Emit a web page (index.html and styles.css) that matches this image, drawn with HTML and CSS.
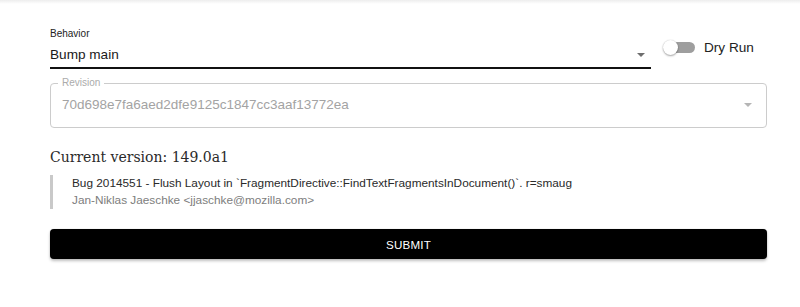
FILE: index.html
```html
<!DOCTYPE html>
<html lang="en">
<head>
<meta charset="utf-8">
<title>Bump</title>
<link rel="stylesheet" href="styles.css">
</head>
<body>
<div class="topshadow"></div>
<main class="page">
  <div class="row">
    <div class="select">
      <label class="select-label">Behavior</label>
      <div class="select-input">
        <span>Bump main</span>
        <svg class="arrow" width="8" height="4" viewBox="0 0 8 4"><path d="M0 0H8L4 4Z"/></svg>
      </div>
    </div>
    <div class="switch"><span class="track"></span><span class="thumb"></span></div>
    <span class="switch-label">Dry Run</span>
  </div>
  <fieldset class="outlined">
    <legend>Revision</legend>
    <div class="outlined-input">
      <span>70d698e7fa6aed2dfe9125c1847cc3aaf13772ea</span>
      <svg class="arrow light" width="8" height="4" viewBox="0 0 8 4"><path d="M0 0H8L4 4Z"/></svg>
    </div>
  </fieldset>
  <h2 class="version">Current version: 149.0a1</h2>
  <blockquote class="commit">
    <div class="msg">Bug 2014551 - Flush Layout in `FragmentDirective::FindTextFragmentsInDocument()`. r=smaug</div>
    <div class="author">Jan-Niklas Jaeschke &lt;jjaschke@mozilla.com&gt;</div>
  </blockquote>
  <button class="submit">SUBMIT</button>
</main>
</body>
</html>
```

FILE: styles.css
```css
* { box-sizing: border-box; }
html, body { margin: 0; padding: 0; background: #fff; }
body {
  font-family: "Liberation Sans", Arial, sans-serif;
  color: #222;
  width: 800px;
  height: 307px;
  overflow: hidden;
}
.topshadow {
  height: 4px;
  background: linear-gradient(to bottom, rgba(0,0,0,0.07), rgba(0,0,0,0));
}
.page {
  padding: 24px 33px 0 50px;
  display: flex;
  flex-direction: column;
}
.row {
  display: flex;
  align-items: flex-start;
}
.select {
  width: 601px;
  display: flex;
  flex-direction: column;
}
.select-label {
  font-size: 10px;
  line-height: 12px;
  color: #222;
}
.select-input {
  display: flex;
  align-items: center;
  justify-content: space-between;
  margin-top: 5px;
  padding: 0 6px 3px 0;
  border-bottom: 2px solid #111;
  font-size: 13.6px;
  line-height: 19px;
  color: #1a1a1a;
}
.arrow { fill: #6e6e6e; display: block; }
.arrow.light { fill: #b5b5b5; }
.switch {
  position: relative;
  width: 32px;
  height: 15px;
  margin: 12px 0 0 12px;
}
.track {
  position: absolute;
  left: 5px;
  top: 2px;
  width: 27px;
  height: 11px;
  border-radius: 6px;
  background: #9e9e9e;
}
.thumb {
  position: absolute;
  left: 0;
  top: 0;
  width: 15px;
  height: 15px;
  border-radius: 50%;
  background: #fff;
  box-shadow: 0 1px 2px rgba(0,0,0,0.35), 0 0 1px rgba(0,0,0,0.2);
}
.switch-label {
  margin: 10px 0 0 9px;
  font-size: 13.6px;
  line-height: 20px;
  color: #222;
}
.outlined {
  margin: 8px 0 0 0;
  padding: 0;
  border: 1px solid #cccccc;
  border-radius: 4px;
  min-width: 0;
}
.outlined legend {
  margin-left: 7px;
  padding: 0 4px;
  font-size: 10px;
  line-height: 12px;
  color: #ababab;
}
.outlined-input {
  display: flex;
  align-items: center;
  justify-content: space-between;
  padding: 6px 14px 12px 11px;
  font-size: 13.5px;
  line-height: 20px;
  color: #a3a3a3;
}
.version {
  margin: 19px 0 0 0;
  font-family: "DejaVu Serif", serif;
  font-weight: normal;
  font-size: 14px;
  line-height: 20px;
  color: #2a2a2a;
}
.commit {
  margin: 8px 0 0 0;
  padding-left: 19px;
  border-left: 3px solid #c9c9c9;
  font-size: 11.8px;
  line-height: 17px;
}
.msg { color: #2a2a2a; }
.author { color: #7d7d7d; }
.submit {
  margin-top: 20px;
  height: 30px;
  border: 0;
  border-radius: 4px;
  background: #000;
  color: #fff;
  font-family: "Liberation Sans", Arial, sans-serif;
  font-size: 11.6px;
  letter-spacing: 0.2px;
  box-shadow: 0 2px 3px rgba(0,0,0,0.25), 0 0 1px rgba(0,0,0,0.3);
}
```
